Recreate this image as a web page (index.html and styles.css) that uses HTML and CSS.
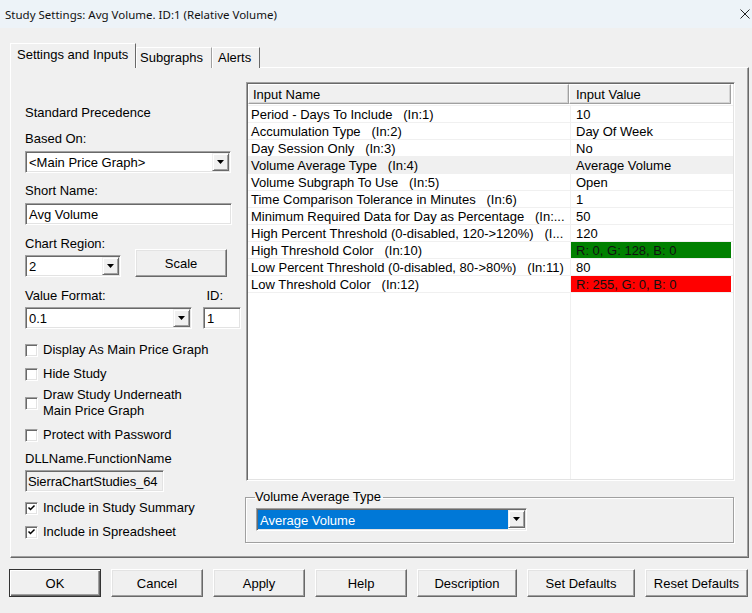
FILE: index.html
```html
<!DOCTYPE html>
<html lang="en">
<head>
    <meta charset="UTF-8">
    <title>Study Settings: Avg Volume. ID:1 (Relative Volume)</title>
    <link rel="stylesheet" href="styles.css">
</head>
<body>
<div class="dialog">
    <div class="titlebar">
        <span>Study Settings: Avg Volume. ID:1 (Relative Volume)</span>
        <svg class="close" viewBox="0 0 10 10"><path d="M0.5 0.5L9.5 9.5M9.5 0.5L0.5 9.5" stroke="#222" stroke-width="1"/></svg>
    </div>

    <div class="tabs">
        <div class="tab tab-active">Settings and Inputs</div>
        <div class="tab tab-sub">Subgraphs</div>
        <div class="tab tab-alerts">Alerts</div>
    </div>

    <div class="panel">
        <!-- left side: study options -->
        <div class="left">
            <div class="label std">Standard Precedence</div>
            <div class="label gap10">Based On:</div>
            <div class="combo based-on">
                <span class="combo-text">&lt;Main Price Graph&gt;</span>
                <span class="arrow"><svg viewBox="0 0 7 4"><path d="M0 0H7L3.5 4Z"/></svg></span>
            </div>
            <div class="label gap9">Short Name:</div>
            <div class="textbox short-name">Avg Volume</div>
            <div class="label gap10">Chart Region:</div>
            <div class="region-row">
                <div class="combo region">
                    <span class="combo-text">2</span>
                    <span class="arrow"><svg viewBox="0 0 7 4"><path d="M0 0H7L3.5 4Z"/></svg></span>
                </div>
                <button class="btn scale">Scale</button>
            </div>
            <div class="format-labels">
                <span>Value Format:</span>
                <span>ID:</span>
            </div>
            <div class="format-row">
                <div class="combo">
                    <span class="combo-text">0.1</span>
                    <span class="arrow"><svg viewBox="0 0 7 4"><path d="M0 0H7L3.5 4Z"/></svg></span>
                </div>
                <div class="textbox">1</div>
            </div>
            <div class="check first"><span class="box"></span>Display As Main Price Graph</div>
            <div class="check"><span class="box"></span>Hide Study</div>
            <div class="check two-line"><span class="box"></span><span>Draw Study Underneath<br>Main Price Graph</span></div>
            <div class="check protect"><span class="box"></span>Protect with Password</div>
            <div class="label dll-label">DLLName.FunctionName</div>
            <div class="textbox readonly">SierraChartStudies_64</div>
            <div class="check summary"><span class="box"><svg viewBox="0 0 9 9"><path d="M1.5 3.5L3.5 5.5L7.5 1.5" fill="none" stroke="#000" stroke-width="1.5"/></svg></span>Include in Study Summary</div>
            <div class="check"><span class="box"><svg viewBox="0 0 9 9"><path d="M1.5 3.5L3.5 5.5L7.5 1.5" fill="none" stroke="#000" stroke-width="1.5"/></svg></span>Include in Spreadsheet</div>
        </div>

        <!-- right side: inputs list -->
        <div class="right">
            <div class="inputs">
                <div class="head">
                    <div class="hcell">Input Name</div>
                    <div class="hcell value-head">Input Value</div>
                </div>
                <div class="rows">
                    <div class="row"><div class="name">Period - Days To Include   (In:1)</div><div class="value">10</div></div>
                    <div class="row"><div class="name">Accumulation Type   (In:2)</div><div class="value">Day Of Week</div></div>
                    <div class="row"><div class="name">Day Session Only   (In:3)</div><div class="value">No</div></div>
                    <div class="row selected"><div class="name">Volume Average Type   (In:4)</div><div class="value">Average Volume</div></div>
                    <div class="row"><div class="name">Volume Subgraph To Use   (In:5)</div><div class="value">Open</div></div>
                    <div class="row"><div class="name">Time Comparison Tolerance in Minutes   (In:6)</div><div class="value">1</div></div>
                    <div class="row"><div class="name">Minimum Required Data for Day as Percentage   (In:...</div><div class="value">50</div></div>
                    <div class="row"><div class="name">High Percent Threshold (0-disabled, 120-&gt;120%)   (I...</div><div class="value">120</div></div>
                    <div class="row"><div class="name">High Threshold Color   (In:10)</div><div class="value green">R: 0, G: 128, B: 0</div></div>
                    <div class="row"><div class="name">Low Percent Threshold (0-disabled, 80-&gt;80%)   (In:11)</div><div class="value">80</div></div>
                    <div class="row"><div class="name">Low Threshold Color   (In:12)</div><div class="value red">R: 255, G: 0, B: 0</div></div>
                    <div class="row filler"><div class="name"></div><div class="value"></div></div>
                </div>
            </div>

            <fieldset class="group">
                <legend>Volume Average Type</legend>
                <div class="combo avg-type">
                    <span class="combo-text chosen">Average Volume</span>
                    <span class="arrow"><svg viewBox="0 0 7 4"><path d="M0 0H7L3.5 4Z"/></svg></span>
                </div>
            </fieldset>
        </div>
    </div>

    <div class="buttons">
        <button class="btn default">OK</button>
        <button class="btn">Cancel</button>
        <button class="btn">Apply</button>
        <button class="btn">Help</button>
        <button class="btn description">Description</button>
        <button class="btn set-defaults">Set Defaults</button>
        <button class="btn reset-defaults">Reset Defaults</button>
    </div>
</div>
</body>
</html>
```

FILE: styles.css
```css
* {
    box-sizing: border-box;
}
body {
    margin: 0;
    background-color: #f0f0f0;
    font-family: "Liberation Sans", Arial, sans-serif;
    font-size: 13px;
    color: #000;
}
.dialog {
    width: 752px;
    height: 613px;
    overflow: hidden;
}
.titlebar {
    height: 28px;
    background-color: #edf3f8;
    display: flex;
    align-items: center;
    justify-content: space-between;
    padding: 0 2px 0 5px;
    font-family: "Noto Sans", "Open Sans", sans-serif;
    font-size: 11.5px;
    color: #111;
}
.close {
    width: 10px;
    height: 10px;
}

/* tabs */
.tabs {
    display: flex;
    align-items: flex-end;
    height: 25px;
    margin: 15px 0 -1px 10px;
    position: relative;
    z-index: 1;
}
.tab {
    height: 21px;
    line-height: 20px;
    background-color: #f0f0f0;
    border-top: 1px solid #fff;
    border-left: 1px solid #fff;
    border-right: 1px solid #a0a0a0;
    white-space: nowrap;
}
.tab-active {
    height: 25px;
    width: 126px;
    padding-left: 6px;
    line-height: 22px;
    border-right-color: #696969;
}
.tab-sub {
    width: 76px;
    padding-left: 3px;
}
.tab-alerts {
    width: 48px;
    padding-left: 5px;
    border-right-color: #696969;
}

/* main panel */
.panel {
    width: 739px;
    height: 491px;
    margin-left: 10px;
    border: 1px solid;
    border-color: #fff #696969 #696969 #fff;
    box-shadow: inset -1px -1px #a0a0a0;
    display: flex;
    padding-left: 14px;
}
.left {
    width: 217px;
    display: flex;
    flex-direction: column;
    align-items: flex-start;
}
.label {
    padding-top: 2px;
    line-height: 14px;
    white-space: nowrap;
}
.std {
    margin-top: 36px;
}
.gap10 {
    margin-top: 10px;
}
.gap9 {
    margin-top: 9px;
}

/* sunken controls */
.combo,
.textbox {
    height: 22px;
    background-color: #fff;
    border: 1px solid;
    border-color: #a0a0a0 #fff #fff #a0a0a0;
    box-shadow: inset 1px 1px #696969, inset -1px -1px #e3e3e3;
    padding: 1px;
}
.combo {
    display: flex;
}
.combo-text {
    flex: 1;
    padding: 2px 0 0 2px;
    line-height: 16px;
    white-space: nowrap;
    overflow: hidden;
}
.arrow {
    width: 17px;
    height: 18px;
    background-color: #f0f0f0;
    border: 1px solid;
    border-color: #f0f0f0 #696969 #696969 #f0f0f0;
    box-shadow: inset 1px 1px #fff, inset -1px -1px #a0a0a0;
    display: flex;
    align-items: center;
    justify-content: center;
}
.arrow svg {
    width: 7px;
    height: 4px;
    fill: #000;
}
.textbox {
    padding: 3px 0 0 3px;
    line-height: 16px;
    white-space: nowrap;
    overflow: hidden;
}
.based-on {
    width: 206px;
    margin-top: 5px;
}
.short-name {
    width: 207px;
    margin-top: 5px;
}
.region-row {
    display: flex;
    align-items: flex-end;
    gap: 14px;
    height: 26px;
}
.region {
    width: 96px;
}
.scale {
    width: 97px;
    height: 26px;
}
.format-labels {
    display: flex;
    justify-content: space-between;
    width: 198px;
    margin-top: 10px;
    padding-top: 2px;
    line-height: 14px;
}
.format-row {
    display: grid;
    grid-template-columns: 167px 38px;
    gap: 11px;
    margin-top: 4px;
}

/* checkboxes */
.check {
    display: flex;
    align-items: center;
    gap: 5px;
    padding-top: 2px;
    line-height: 14px;
    margin-top: 8px;
    white-space: nowrap;
}
.check.first {
    margin-top: 12px;
}
.check.two-line {
    margin-top: 6px;
    padding-top: 0;
    line-height: 16px;
}
.check.protect,
.check.summary {
    margin-top: 7px;
}
.box {
    width: 13px;
    height: 13px;
    flex-shrink: 0;
    background-color: #fff;
    border: 1px solid;
    border-color: #a0a0a0 #fff #fff #a0a0a0;
    box-shadow: inset 1px 1px #696969, inset -1px -1px #e3e3e3;
    display: flex;
    align-items: center;
    justify-content: center;
}
.box svg {
    width: 9px;
    height: 9px;
}
.dll-label {
    margin-top: 8px;
}
.readonly {
    width: 139px;
    margin-top: 4px;
    background-color: #f0f0f0;
    padding-left: 2px;
    letter-spacing: -0.1px;
}

/* inputs list */
.right {
    width: 489px;
    margin-left: 4px;
    margin-top: 14px;
}
.inputs {
    height: 399px;
    background-color: #fff;
    border: 1px solid;
    border-color: #a0a0a0 #fff #fff #a0a0a0;
    box-shadow: inset 1px 1px #696969, inset -1px -1px #e3e3e3;
    padding: 1px;
    display: flex;
    flex-direction: column;
}
.head {
    display: grid;
    grid-template-columns: 321px 162px;
    height: 20px;
}
.hcell {
    background-color: #f0f0f0;
    border: 1px solid;
    border-color: #fff #a0a0a0 #a0a0a0 #fff;
    box-shadow: inset -1px -1px #d4d4d4;
    padding: 2px 0 0 4px;
    line-height: 16px;
}
.value-head {
    padding-left: 6px;
}
.rows {
    flex: 1;
    display: flex;
    flex-direction: column;
    padding-top: 1px;
}
.row {
    display: grid;
    grid-template-columns: 322px 161px;
    height: 17px;
    border-top: 1px solid #f0f0f0;
}
.row.selected {
    background-color: #f0f0f0;
}
.row.filler {
    flex: 1;
}
.name {
    padding: 2px 0 0 3px;
    line-height: 14px;
    white-space: pre;
    overflow: hidden;
}
.value {
    border-left: 1px solid #f0f0f0;
    padding: 2px 0 0 5px;
    line-height: 14px;
    white-space: nowrap;
    overflow: hidden;
}
.value.green {
    background-color: #008000;
    color: #111;
}
.value.red {
    background-color: #ff0000;
    color: #111;
}

/* group box */
.group {
    margin: 8px 0 0 -1px;
    width: 489px;
    border: 1px solid #a0a0a0;
    box-shadow: 1px 1px #fff, inset 1px 1px #fff;
    padding: 0 0 11px 9px;
}
.group legend {
    padding: 0 2px 0 0;
    line-height: 16px;
}
.avg-type {
    width: 271px;
    height: 23px;
    margin-top: 3px;
    margin-left: 1px;
}
.chosen {
    background-color: #0078d7;
    color: #fff;
    padding-top: 2px;
    line-height: 17px;
}

/* buttons */
.btn {
    width: 92px;
    height: 28px;
    padding: 0;
    font-family: "Liberation Sans", Arial, sans-serif;
    font-size: 13px;
    color: #000;
    background-color: #f0f0f0;
    border: 1px solid;
    border-color: #fff #696969 #696969 #fff;
    box-shadow: inset -1px -1px #a0a0a0, inset 1px 1px #e3e3e3;
}
.btn.default {
    border-color: #333;
    box-shadow: inset 1px 1px #fff, inset -1px -1px #696969, inset -2px -2px #a0a0a0;
}
.buttons {
    display: flex;
    gap: 10px;
    margin: 11px 0 0 9px;
}
.description {
    width: 100px;
}
.set-defaults {
    width: 108px;
}
.reset-defaults {
    width: 103px;
}
```
